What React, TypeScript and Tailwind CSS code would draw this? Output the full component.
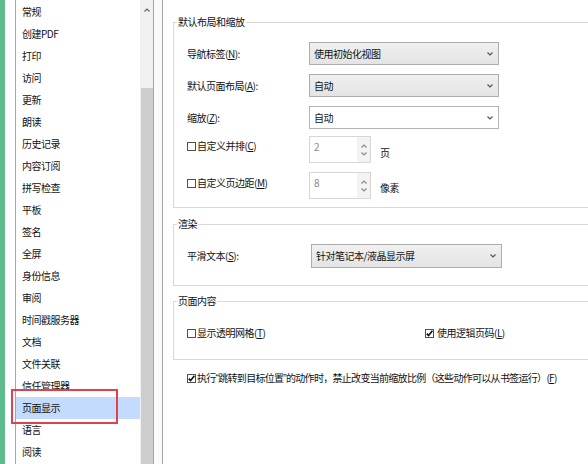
import type { ReactNode } from 'react'

const items = [
  '常规',
  '创建PDF',
  '打印',
  '访问',
  '更新',
  '朗读',
  '历史记录',
  '内容订阅',
  '拼写检查',
  '平板',
  '签名',
  '全屏',
  '身份信息',
  '审阅',
  '时间戳服务器',
  '文档',
  '文件关联',
  '信任管理器',
  '页面显示',
  '语言',
  '阅读',
]

function Chevron({ up = false, className = '' }: { up?: boolean; className?: string }) {
  return (
    <svg width="6" height="4" viewBox="0 0 6 4" className={className}>
      <path
        d={up ? 'M0.5 3.5 L3 1 L5.5 3.5' : 'M0.5 0.5 L3 3 L5.5 0.5'}
        fill="none"
        stroke="currentColor"
        strokeWidth="1.2"
      />
    </svg>
  )
}

function Box({ checked = false }: { checked?: boolean }) {
  return (
    <span className="relative inline-block h-[9px] w-[9px] shrink-0 border border-[#505050] bg-white">
      {checked && (
        <svg width="9" height="9" viewBox="0 0 9 9" className="absolute -left-[1px] -top-[1px]">
          <path d="M1.8 4.6 L3.6 6.6 L7.4 1.8" fill="none" stroke="#111" strokeWidth="1.6" />
        </svg>
      )}
    </span>
  )
}

function Select({ value, white = false, className = '' }: { value: string; white?: boolean; className?: string }) {
  return (
    <div
      className={`flex shrink-0 items-center justify-between border pl-[4px] pr-[5px] ${
        white ? 'border-[#b4b4b4] bg-white' : 'border-[#adadad] bg-gradient-to-b from-[#f0f0f0] to-[#e4e4e4]'
      } ${className}`}
    >
      <span>{value}</span>
      <Chevron className="text-[#555]" />
    </div>
  )
}

function Spinner({ value }: { value: string }) {
  return (
    <div className="flex h-[27px] w-[62px] shrink-0 border border-[#d6d6d6] bg-white">
      <span className="flex-1 pl-[4px] pt-[3px] text-[#8a8a8a]">{value}</span>
      <div className="flex w-[13px] flex-col items-center gap-[4px] bg-[#f3f3f3] pt-[7px] text-[#8a8a8a]">
        <Chevron up />
        <Chevron />
      </div>
    </div>
  )
}

function Group({ title, className = '', children }: { title: string; className?: string; children: ReactNode }) {
  return (
    <div className={`relative w-[440px] border border-[#d9d9d9] ${className}`}>
      <span className="absolute -top-[8px] left-[3px] bg-white px-[1px] leading-[14px]">{title}</span>
      {children}
    </div>
  )
}

function Mn({ text, k }: { text: string; k: string }) {
  return (
    <span>
      {text}(<u className="underline-offset-1">{k}</u>)
    </span>
  )
}

export default function App() {
  return (
    <div className="flex h-[464px] w-[588px] overflow-hidden bg-white font-['Noto_Sans_CJK_SC',sans-serif] text-[10px] leading-[14px] tracking-[-0.5px] text-[#111]">
      <div className="w-[5px] shrink-0 bg-[#5dbb8d]" />
      <div className="w-[10px] shrink-0" />

      <div className="relative flex w-[139px] shrink-0 border-x border-[#a6a6a6]">
        <div className="flex w-[124px] flex-col pt-[1px]">
          {items.map((item) => (
            <div
              key={item}
              className={`flex h-[22px] shrink-0 items-center whitespace-nowrap pl-[6px] ${
                item === '页面显示' ? 'bg-[#c3dbfc]' : ''
              }`}
            >
              {item}
            </div>
          ))}
        </div>
        <div className="flex w-[13px] flex-col bg-[#f0f0f0]">
          <div className="flex h-[20px] items-center justify-center text-[#666]">
            <Chevron up />
          </div>
          <div className="h-[68px]" />
          <div className="ml-[1px] flex-1 bg-[#cdcdcd]" />
        </div>
        <div className="absolute left-[-5px] top-[389px] h-[35px] w-[107px] border-2 border-[#e2404a]" />
      </div>

      <div className="w-[8px] shrink-0 bg-[#fafafa]" />

      <div className="min-w-0 flex-1 overflow-hidden border-l border-[#a3a3a3] pl-[10px] pt-[22px]">
        <Group title="默认布局和缩放" className="pb-[8px] pl-[13px] pt-[19px]">
          <div className="flex h-[23px] items-center">
            <span className="w-[122px] shrink-0">
              <Mn text="导航标签" k="N" />:
            </span>
            <Select value="使用初始化视图" className="h-[23px] w-[190px]" />
          </div>
          <div className="mt-[9px] flex h-[23px] items-center">
            <span className="w-[122px] shrink-0">
              <Mn text="默认页面布局" k="A" />:
            </span>
            <Select value="自动" className="h-[23px] w-[190px]" />
          </div>
          <div className="mt-[9px] flex h-[23px] items-center">
            <span className="w-[122px] shrink-0">
              <Mn text="缩放" k="Z" />:
            </span>
            <Select value="自动" white className="h-[23px] w-[190px]" />
          </div>
          <div className="mt-[7px] flex h-[27px] items-start">
            <span className="flex w-[122px] shrink-0 items-center pt-[3px]">
              <Box />
              <span className="ml-[1px]">
                <Mn text="自定义并排" k="C" />
              </span>
            </span>
            <Spinner value="2" />
            <span className="ml-[9px] mt-[10px]">页</span>
          </div>
          <div className="mt-[9px] flex h-[27px] items-start">
            <span className="flex w-[122px] shrink-0 items-center pt-[4px]">
              <Box />
              <span className="ml-[1px]">
                <Mn text="自定义页边距" k="M" />
              </span>
            </span>
            <Spinner value="8" />
            <span className="ml-[9px] mt-[9px]">像素</span>
          </div>
        </Group>

        <Group title="渲染" className="mt-[16px] pb-[17px] pl-[13px] pt-[19px]">
          <div className="flex h-[24px] items-center">
            <span className="w-[124px] shrink-0">
              <Mn text="平滑文本" k="S" />:
            </span>
            <Select value="针对笔记本/液晶显示屏" className="h-[24px] w-[191px]" />
          </div>
        </Group>

        <Group title="页面内容" className="mt-[15px] pb-[19px] pl-[13px] pt-[24px]">
          <div className="flex h-[14px] items-center">
            <span className="flex w-[238px] shrink-0 items-center">
              <Box />
              <span className="ml-[1px]">
                <Mn text="显示透明网格" k="T" />
              </span>
            </span>
            <span className="flex items-center">
              <Box checked />
              <span className="ml-[3px]">
                <Mn text="使用逻辑页码" k="L" />
              </span>
            </span>
          </div>
        </Group>

        <div className="ml-[14px] mt-[11px] flex h-[14px] items-center whitespace-nowrap tracking-[-0.7px]">
          <Box checked />
          <span className="ml-[1px]">
            执行<span className="font-['Liberation_Sans',sans-serif]">“</span>跳转到目标位置
            <span className="font-['Liberation_Sans',sans-serif]">”</span>的动作时，禁止改变当前缩放比例（这些动作可以从书签运行）(
            <u>F</u>)
          </span>
        </div>
      </div>
    </div>
  )
}
